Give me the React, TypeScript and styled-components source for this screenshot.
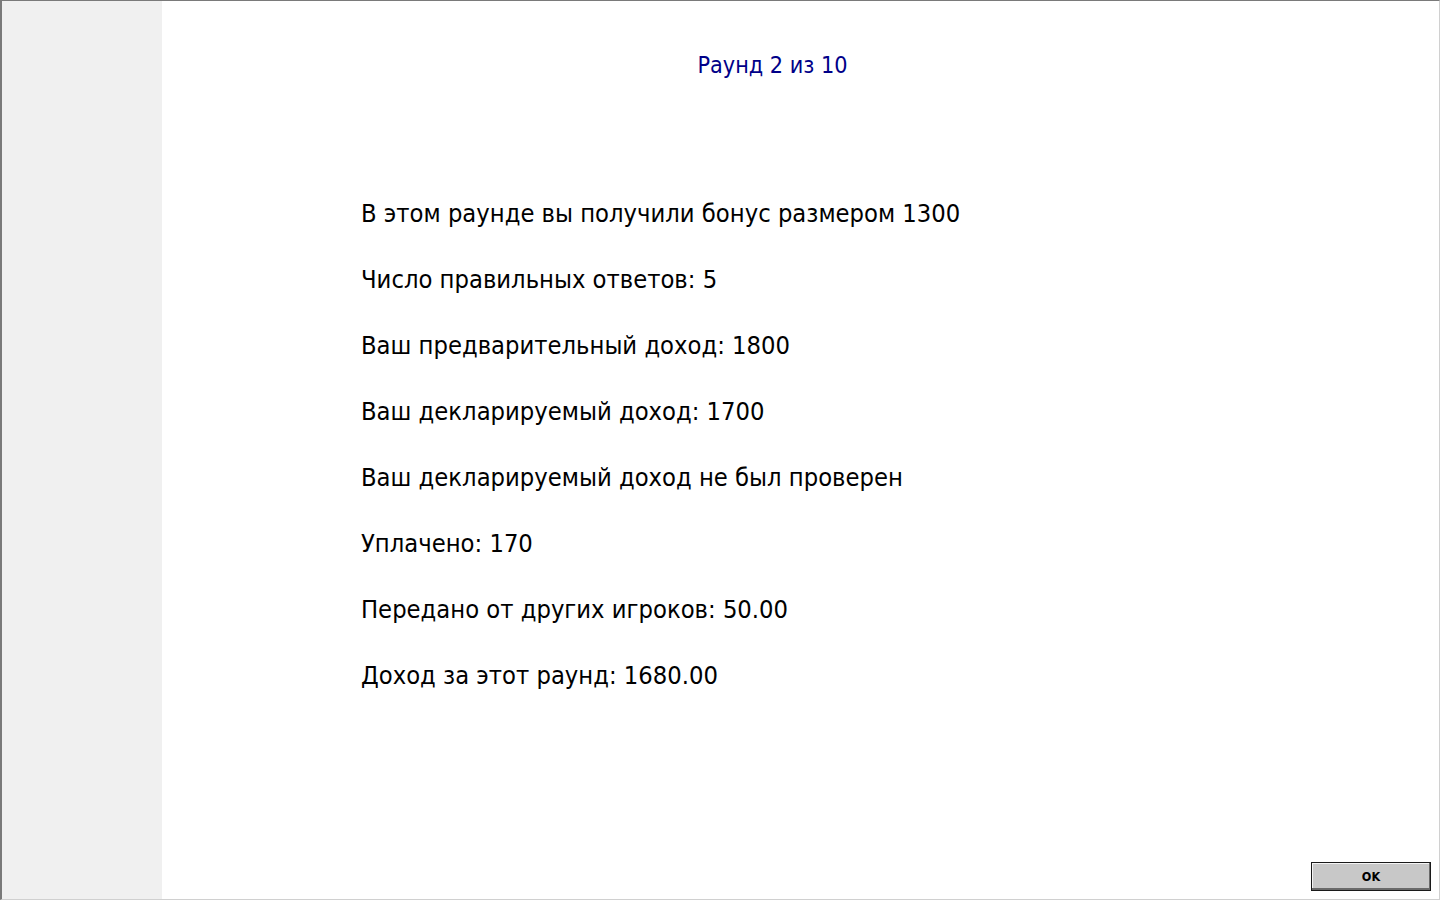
import React from "react";
import styled, { createGlobalStyle } from "styled-components";

const Global = createGlobalStyle`
  html, body { margin: 0; padding: 0; background: #ffffff; }
  body { font-family: Tahoma, "DejaVu Sans Condensed", "DejaVu Sans", sans-serif; }
  * { box-sizing: border-box; }
`;

const Frame = styled.div`
  width: 1440px;
  height: 900px;
  display: flex;
  border-top: 1px solid #7a7a7a;
  border-left: 2px solid #7a7a7a;
  border-right: 1px solid #d0d0d0;
  border-bottom: 1px solid #d0d0d0;
  background: #ffffff;
  overflow: hidden;
`;

const Sidebar = styled.div`
  width: 160px;
  flex: none;
  background: #f0f0f0;
`;

const Main = styled.div`
  flex: 1;
  display: flex;
  flex-direction: column;
`;

const Title = styled.div`
  margin-top: 50px;
  padding-right: 56px;
  text-align: center;
  font-size: 23.2px;
  line-height: 28px;
  color: #000088;
`;

const Lines = styled.div`
  margin-top: 120px;
  padding-left: 199px;
  display: flex;
  flex-direction: column;
  gap: 36px;
`;

const Line = styled.div`
  font-size: 25.3px;
  line-height: 30px;
  color: #000000;
`;

const Footer = styled.div`
  margin-top: auto;
  display: flex;
  justify-content: flex-end;
  padding: 0 8px 8px 0;
`;

const OkButton = styled.button`
  width: 120px;
  height: 29px;
  background: #c8c8c8;
  border: 1px solid #1a1a1a;
  box-shadow: inset -1px -2px 0 #6a6a6a, inset 1px 1px 0 #f4f4f4;
  font-family: Tahoma, "DejaVu Sans Condensed", "DejaVu Sans", sans-serif;
  font-size: 12.5px;
  font-weight: bold;
  color: #000;
  padding: 0;
`;

const lines = [
  "В этом раунде вы получили бонус размером 1300",
  "Число правильных ответов: 5",
  "Ваш предварительный доход: 1800",
  "Ваш декларируемый доход: 1700",
  "Ваш декларируемый доход не был проверен",
  "Уплачено: 170",
  "Передано от других игроков: 50.00",
  "Доход за этот раунд: 1680.00",
];

export default function App() {
  return (
    <>
      <Global />
      <Frame>
        <Sidebar />
        <Main>
          <Title>Раунд 2 из 10</Title>
          <Lines>
            {lines.map((t) => (
              <Line key={t}>{t}</Line>
            ))}
          </Lines>
          <Footer>
            <OkButton>OK</OkButton>
          </Footer>
        </Main>
      </Frame>
    </>
  );
}
